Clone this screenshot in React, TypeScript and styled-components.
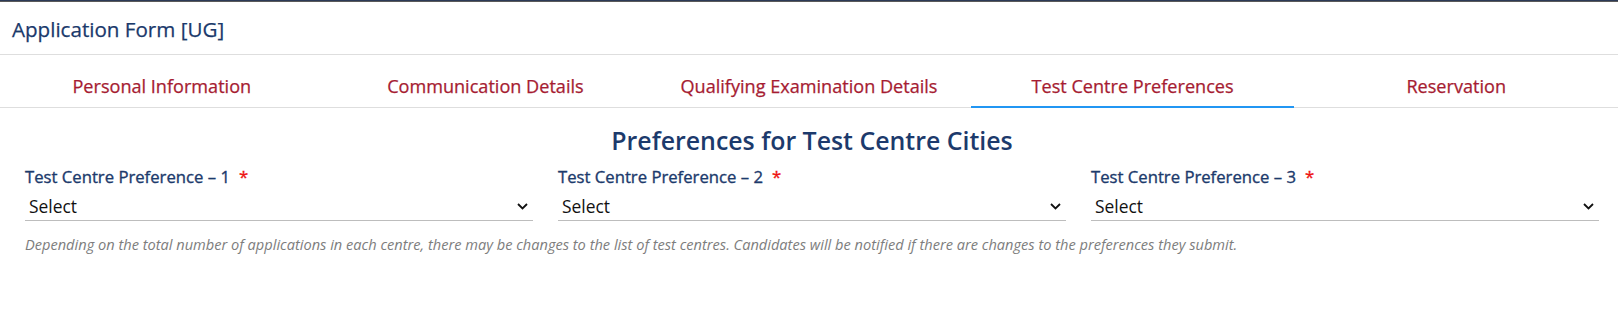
import React from "react";
import styled, { createGlobalStyle } from "styled-components";

const Global = createGlobalStyle`
  html, body { margin: 0; padding: 0; background: #ffffff; }
  body { font-family: "Open Sans", "Noto Sans", Arial, sans-serif; }
  * { box-sizing: border-box; }
`;

const Page = styled.div`
  width: 1618px;
  height: 316px;
  overflow: hidden;
  background: #ffffff;
`;

const TopStrip = styled.div`
  height: 2px;
  background: linear-gradient(#2c3a56 0%, #2c3a56 50%, #5a5a5a 50%, #5a5a5a 100%);
`;

const Header = styled.header`
  height: 53px;
  display: flex;
  align-items: center;
  padding: 0 12px;
  border-bottom: 1px solid #dedede;
`;

const Title = styled.h1`
  margin: 0;
  font-size: 20.6px;
  font-weight: 500;
  color: #1a396b;
  padding-top: 1px;
  -webkit-text-stroke: 0.25px #1a396b;
`;

const TabBar = styled.nav`
  display: grid;
  grid-template-columns: repeat(5, 1fr);
  height: 53px;
`;

const Tab = styled.div<{ $active?: boolean }>`
  display: flex;
  align-items: center;
  justify-content: center;
  padding-top: 10px;
  font-size: 18.1px;
  font-weight: 500;
  color: #a61c32;
  -webkit-text-stroke: 0.25px #a61c32;
  border-bottom: ${(p) => (p.$active ? "2px solid #2196f3" : "1px solid #dedede")};
`;

const Section = styled.section`
  padding: 15px 19px 0 25px;
`;

const SectionTitle = styled.h2`
  margin: 0;
  text-align: center;
  font-size: 24.9px;
  line-height: 34px;
  font-weight: 600;
  color: #1c3a6c;
`;

const Fields = styled.div`
  display: grid;
  grid-template-columns: repeat(3, 1fr);
  column-gap: 25px;
  margin-top: 10px;
`;

const Field = styled.div`
  display: flex;
  flex-direction: column;
`;

const Label = styled.label`
  font-size: 16.7px;
  line-height: 20px;
  font-weight: 500;
  color: #1c3a6c;
  -webkit-text-stroke: 0.35px #1c3a6c;
  white-space: nowrap;
`;

const Star = styled.span`
  color: #ee1111;
  -webkit-text-stroke: 0.35px #ee1111;
  margin-left: 9px;
`;

const SelectWrap = styled.div`
  position: relative;
  margin-top: 6px;
`;

const Select = styled.select`
  appearance: none;
  -webkit-appearance: none;
  width: 100%;
  height: 28px;
  border: none;
  border-bottom: 1px solid #bdbdbd;
  background: transparent;
  padding: 0 24px 1px 4px;
  font-family: "Open Sans", "Noto Sans", Arial, sans-serif;
  font-size: 17.4px;
  color: #111111;
  outline: none;
`;

const Chevron = styled.svg`
  position: absolute;
  right: 5px;
  top: 10px;
  width: 11px;
  height: 7px;
  pointer-events: none;
`;

const Help = styled.p`
  margin: 14px 0 0;
  font-size: 14.6px;
  line-height: 18px;
  font-style: italic;
  color: #7d7d7d;
`;

const tabs = [
  "Personal Information",
  "Communication Details",
  "Qualifying Examination Details",
  "Test Centre Preferences",
  "Reservation",
];

export default function App() {
  return (
    <Page>
      <Global />
      <TopStrip />
      <Header>
        <Title>Application Form [UG]</Title>
      </Header>
      <TabBar>
        {tabs.map((t) => (
          <Tab key={t} $active={t === "Test Centre Preferences"}>
            {t}
          </Tab>
        ))}
      </TabBar>
      <Section>
        <SectionTitle>Preferences for Test Centre Cities</SectionTitle>
        <Fields>
          {[1, 2, 3].map((n) => (
            <Field key={n}>
              <Label>
                Test Centre Preference – {n}
                <Star>*</Star>
              </Label>
              <SelectWrap>
                <Select defaultValue="">
                  <option value="">Select</option>
                </Select>
                <Chevron viewBox="0 0 11 7">
                  <path d="M1 1 L5.5 5.5 L10 1" fill="none" stroke="#111" strokeWidth="1.8" />
                </Chevron>
              </SelectWrap>
            </Field>
          ))}
        </Fields>
        <Help>
          Depending on the total number of applications in each centre, there may be changes to the list of test
          centres. Candidates will be notified if there are changes to the preferences they submit.
        </Help>
      </Section>
    </Page>
  );
}
